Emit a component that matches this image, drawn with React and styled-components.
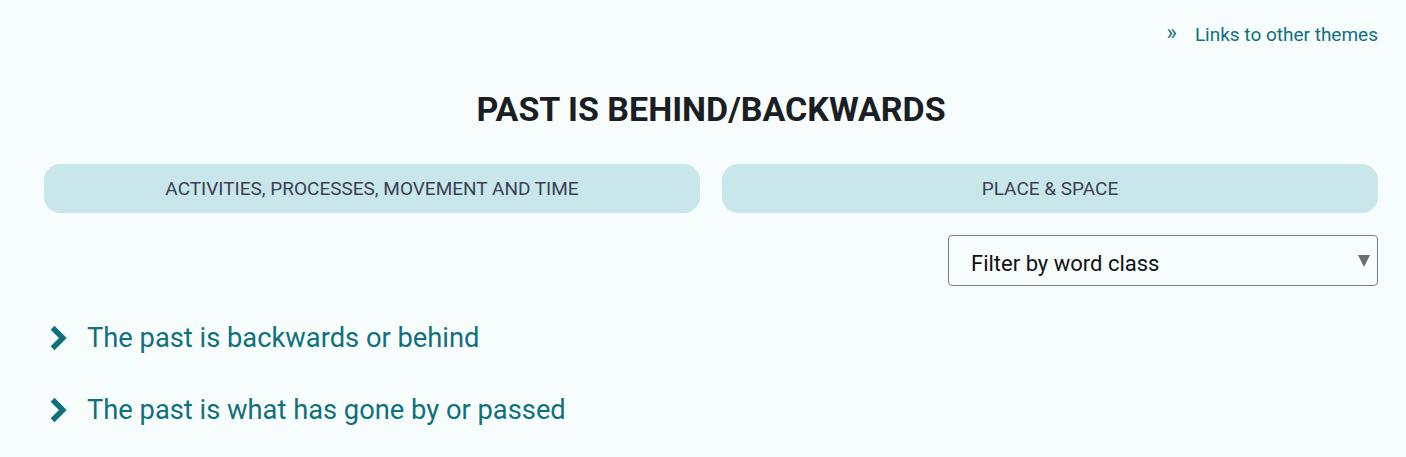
import React from 'react';
import styled, { createGlobalStyle } from 'styled-components';

const GlobalStyle = createGlobalStyle`
  html, body {
    margin: 0;
    padding: 0;
    background: #f7fcfd;
    font-family: Roboto, "Liberation Sans", sans-serif;
  }
`;

const themes = ['Activities, processes, movement and time', 'Place & space'];
const items = ['The past is backwards or behind', 'The past is what has gone by or passed'];

const App = () => {
  return (
    <StPage>
      <GlobalStyle />
      <StTopBar>
        <StLink href="#">
          <StLinkIcon>»</StLinkIcon>
          Links to other themes
        </StLink>
      </StTopBar>
      <StTitle>Past is behind/backwards</StTitle>
      <StThemeRow>
        {themes.map((t) => (
          <StThemeBtn key={t}>{t}</StThemeBtn>
        ))}
      </StThemeRow>
      <StFilterRow>
        <StSelectWrap>
          <StSelect defaultValue="">
            <option value="">Filter by word class</option>
            <option value="noun">Noun</option>
            <option value="verb">Verb</option>
          </StSelect>
          <StArrow viewBox="0 0 12 12">
            <path d="M0 0 H12 L6 12 Z" fill="currentColor" />
          </StArrow>
        </StSelectWrap>
      </StFilterRow>
      <StList>
        {items.map((i) => (
          <StItem key={i}>
            <StChevron viewBox="0 0 18 26">
              <path d="M4 3.5 L13.5 13 L4 22.5" fill="none" stroke="currentColor" strokeWidth="5" strokeLinejoin="miter" />
            </StChevron>
            {i}
          </StItem>
        ))}
      </StList>
    </StPage>
  );
};

const StPage = styled.div`
  padding: 23px 28px 0 44px;
  min-height: 457px;
  box-sizing: border-box;
`;

const StTopBar = styled.div`
  display: flex;
  justify-content: flex-end;
`;

const StLink = styled.a`
  display: flex;
  align-items: center;
  gap: 18px;
  color: #10707c;
  text-decoration: none;
  font-size: 19px;
  line-height: 24px;
`;

const StLinkIcon = styled.span`
  font-size: 22px;
  position: relative;
  top: -2px;
`;

const StTitle = styled.h1`
  margin: 42px 0 0;
  text-align: center;
  text-transform: uppercase;
  font-size: 34px;
  font-weight: 700;
  color: #1b1e22;
  line-height: 40px;
`;

const StThemeRow = styled.div`
  display: grid;
  grid-template-columns: 1fr 1fr;
  gap: 22px;
  margin-top: 35px;
`;

const StThemeBtn = styled.button`
  height: 49px;
  border: none;
  border-radius: 16px;
  background: #c9e7ea;
  color: #3b3f55;
  font-family: Roboto, "Liberation Sans", sans-serif;
  font-size: 19px;
  text-transform: uppercase;
  cursor: pointer;
`;

const StFilterRow = styled.div`
  display: flex;
  justify-content: flex-end;
  margin-top: 22px;
`;

const StSelectWrap = styled.div`
  position: relative;
  width: 430px;
`;

const StSelect = styled.select`
  appearance: none;
  width: 100%;
  height: 51px;
  padding: 5px 40px 0 22px;
  border: 1px solid #7d7d7d;
  border-radius: 4px;
  background: #f7fcfd;
  color: #111;
  font-family: Roboto, "Liberation Sans", sans-serif;
  font-size: 22px;
`;

const StArrow = styled.svg`
  position: absolute;
  right: 8px;
  top: 20px;
  width: 12px;
  height: 12px;
  color: #6b6f70;
  pointer-events: none;
`;

const StList = styled.div`
  display: flex;
  flex-direction: column;
  gap: 40px;
  margin-top: 36px;
`;

const StItem = styled.div`
  display: flex;
  align-items: center;
  gap: 19px;
  padding-left: 4px;
  color: #10707c;
  font-size: 27.3px;
  line-height: 32px;
  cursor: pointer;
`;

const StChevron = styled.svg`
  width: 20px;
  height: 28px;
  color: #10707c;
`;

export default App;
